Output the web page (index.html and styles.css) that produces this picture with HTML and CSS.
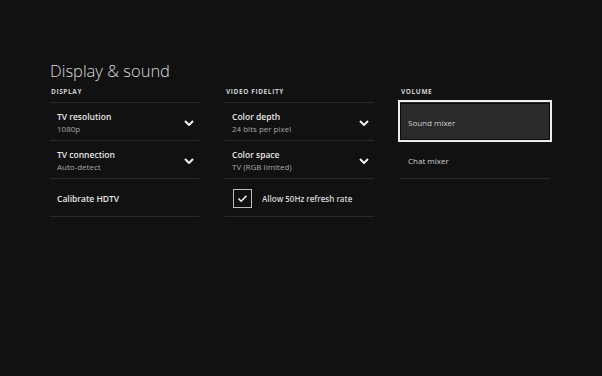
FILE: index.html
```html
<!DOCTYPE html>
<html lang="en">
<head>
    <meta charset="UTF-8">
    <title>Display &amp; sound</title>
    <link rel="stylesheet" href="styles.css">
</head>
<body>
    <div class="Page">
        <h1 class="Title">Display &amp; sound</h1>
        <div class="Columns">
            <div class="Column">
                <div class="Header">DISPLAY</div>
                <div class="Item">
                    <div class="Label">
                        <div class="Name">TV resolution</div>
                        <div class="Value">1080p</div>
                    </div>
                    <svg class="Chevron" viewBox="0 0 10 6"><path d="M1 1 L5 5 L9 1"/></svg>
                </div>
                <div class="Item">
                    <div class="Label">
                        <div class="Name">TV connection</div>
                        <div class="Value">Auto-detect</div>
                    </div>
                    <svg class="Chevron" viewBox="0 0 10 6"><path d="M1 1 L5 5 L9 1"/></svg>
                </div>
                <div class="Item">
                    <div class="Label">
                        <div class="Name">Calibrate HDTV</div>
                    </div>
                </div>
            </div>
            <div class="Column">
                <div class="Header">VIDEO FIDELITY</div>
                <div class="Item">
                    <div class="Label">
                        <div class="Name">Color depth</div>
                        <div class="Value">24 bits per pixel</div>
                    </div>
                    <svg class="Chevron" viewBox="0 0 10 6"><path d="M1 1 L5 5 L9 1"/></svg>
                </div>
                <div class="Item">
                    <div class="Label">
                        <div class="Name">Color space</div>
                        <div class="Value">TV (RGB limited)</div>
                    </div>
                    <svg class="Chevron" viewBox="0 0 10 6"><path d="M1 1 L5 5 L9 1"/></svg>
                </div>
                <div class="Item CheckItem">
                    <div class="Checkbox">
                        <svg viewBox="0 0 12 10"><path d="M1.5 5 L4.5 8 L10.5 2"/></svg>
                    </div>
                    <div class="CheckText">Allow 50Hz refresh rate</div>
                </div>
            </div>
            <div class="Column">
                <div class="Header">VOLUME</div>
                <div class="Item Plain Focused">
                    <div class="PlainText">Sound mixer</div>
                </div>
                <div class="Item Plain">
                    <div class="PlainText">Chat mixer</div>
                </div>
            </div>
        </div>
    </div>
</body>
</html>
```
FILE: styles.css
```css
body, html {
    margin: 0;
    height: 100%;
    background-color: #111111;
    color: #e6e6e6;
    font-family: "Open Sans", "Noto Sans", sans-serif;
}

.Page {
    padding: 59px 0 0 50px;
}

.Title {
    margin: 0;
    font-size: 16.5px;
    font-weight: 300;
    line-height: 24px;
    color: #dcdcdc;
}

.Columns {
    display: grid;
    grid-template-columns: 149px 149px 150px;
    column-gap: 26px;
}

.Header {
    font-size: 6.5px;
    font-weight: 700;
    letter-spacing: 0.6px;
    color: #cfcfcf;
    height: 19px;
    line-height: 17px;
    padding-left: 1px;
}

.Item {
    display: flex;
    align-items: center;
    justify-content: space-between;
    height: 35px;
    border-top: 1px solid #282828;
    padding: 2px 5px 0 7px;
}

.Item:last-child {
    border-bottom: 1px solid #282828;
}

.Name {
    font-size: 8.5px;
    font-weight: 600;
    color: #e8e8e8;
    line-height: 12px;
}

.Value {
    font-size: 8px;
    color: #a8a8a8;
    line-height: 12px;
}

.Chevron {
    width: 10px;
    height: 6px;
}

.Chevron path {
    fill: none;
    stroke: #f2f2f2;
    stroke-width: 2;
}

.CheckItem {
    justify-content: flex-start;
    padding-left: 8px;
}

.Checkbox {
    width: 17px;
    height: 17px;
    border: 1.5px solid #bdbdbd;
    display: flex;
    align-items: center;
    justify-content: center;
    margin-right: 10px;
}

.Checkbox svg {
    width: 11px;
    height: 9px;
}

.Checkbox path {
    fill: none;
    stroke: #f2f2f2;
    stroke-width: 1.8;
}

.CheckText {
    font-size: 8px;
    font-weight: 600;
    color: #d8d8d8;
}

.Plain {
    padding-left: 8px;
}

.PlainText {
    font-size: 8px;
    color: #d0d0d0;
}

.Focused {
    background-color: #2a2a2a;
    border-top-color: transparent;
    outline: 2px solid #ececec;
    box-shadow: inset 0 0 0 1px #0c0c0c;
}
```
